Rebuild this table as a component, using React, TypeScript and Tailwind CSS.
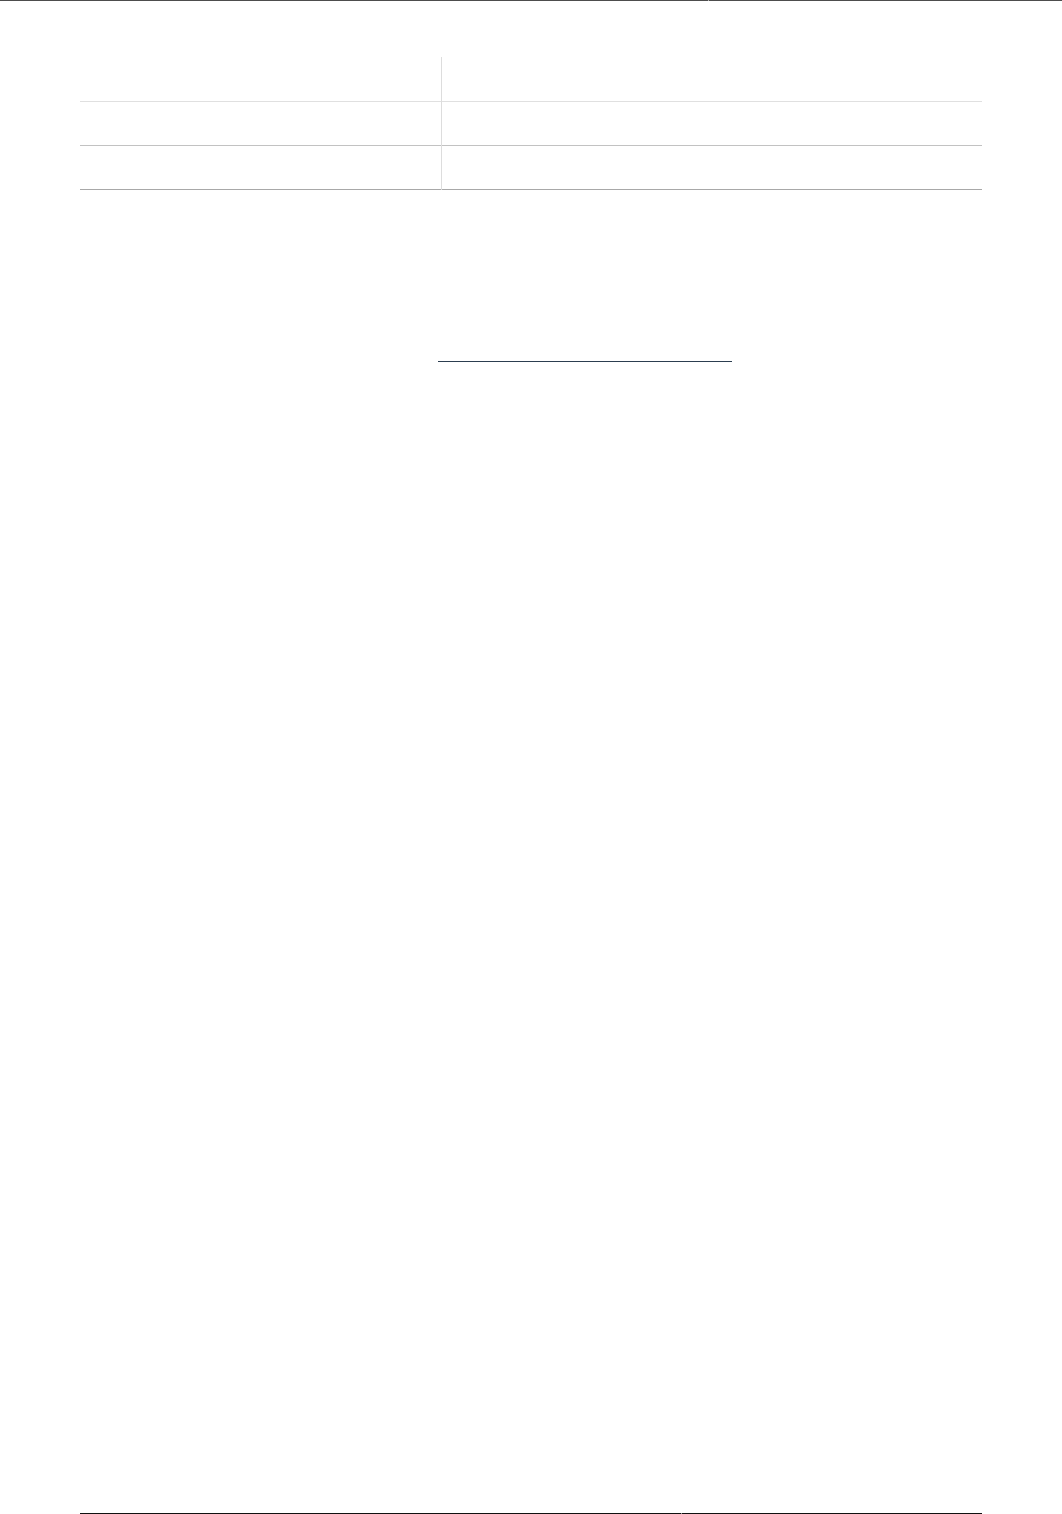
import React from 'react';

const rows = [
  { border: 'border-[#e0e0e0]' },
  { border: 'border-[#c2c2c2]' },
  { border: 'border-[#a8a8a8]' },
];

export default function App() {
  return (
    <div className="h-[1514px] flex flex-col bg-white" style={{ fontFamily: '"Liberation Sans", Arial, sans-serif' }}>
      {/* top rule */}
      <div className="flex h-px shrink-0">
        <div className="w-[708px] bg-[#4d4d4d]" />
        <div className="w-px bg-[#b0b0b0]" />
        <div className="flex-1 bg-[#4d4d4d]" />
      </div>

      <main className="px-[80px] flex flex-col">
        <table className="mt-[56px] w-[902px] border-collapse">
          <tbody>
            {rows.map((r, i) => (
              <tr key={i} className={`h-[44px] border-b ${r.border}`}>
                <td className="w-[361px] border-r border-[#dddddd] p-0" />
                <td className="p-0" />
              </tr>
            ))}
          </tbody>
        </table>

        <a className="mt-[171px] ml-[358px] w-[294px] h-px bg-[#2c3e50] block" />
      </main>

      <div className="flex-1" />

      {/* bottom rule */}
      <div className="mx-[80px] flex h-px shrink-0">
        <div className="w-[601px] bg-[#111111]" />
        <div className="w-px bg-[#999999]" />
        <div className="flex-1 bg-[#111111]" />
      </div>
    </div>
  );
}
